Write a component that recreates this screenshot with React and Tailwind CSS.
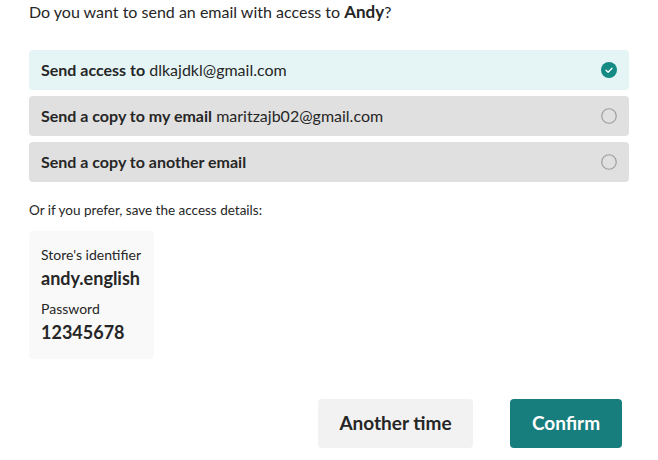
const font = { fontFamily: "Lato, 'Noto Sans', sans-serif" };

function CheckIcon() {
    return (
        <svg width="16" height="16" viewBox="0 0 16 16">
            <circle cx="8" cy="8" r="8" fill="#138a84" />
            <path d="M5 8.2 L7.1 10.2 L11 6.2" stroke="#fff" strokeWidth="1.3" fill="none" strokeLinecap="round" strokeLinejoin="round" />
        </svg>
    );
}

function EmptyCircle() {
    return (
        <svg width="16" height="16" viewBox="0 0 16 16">
            <circle cx="8" cy="8" r="7.25" fill="none" stroke="#9e9e9e" strokeWidth="1.2" />
        </svg>
    );
}

function Option({ label, email, active }) {
    return (
        <div className={`flex flex-row items-center justify-between h-10 rounded px-3 ${active ? "bg-[#e5f5f6]" : "bg-[#e0e0e0]"}`}>
            <span className="text-[16px] text-[#262626]">
                <span className="font-bold">{label}</span>
                {email && <span> {email}</span>}
            </span>
            <div>{active ? <CheckIcon /> : <EmptyCircle />}</div>
        </div>
    );
}

export default function App() {
    return (
        <div className="w-[658px] h-[460px] bg-white text-[#262626] pl-[29px] pr-[29px]" style={font}>
            <div className="pt-[2px] text-[16px] h-[50px] leading-[20px]">
                Do you want to send an email with access to <span className="font-bold text-[17px]">Andy</span>?
            </div>
            <div className="flex flex-col gap-[6px]">
                <Option label="Send access to" email="dlkajdkl@gmail.com" active />
                <Option label="Send a copy to my email" email="maritzajb02@gmail.com" />
                <Option label="Send a copy to another email" />
            </div>
            <div className="mt-[19px] text-[13.5px] leading-[18px]">Or if you prefer, save the access details:</div>
            <div className="mt-[12px] w-[125px] h-[128px] bg-[#f9f9f9] rounded-sm px-3 pt-[15px]">
                <div className="text-[14px] leading-[18px]">Store's identifier</div>
                <div className="text-[18px] font-bold leading-[28px]">andy.english</div>
                <div className="mt-[8px] text-[14px] leading-[18px]">Password</div>
                <div className="text-[18px] font-bold leading-[28px]">12345678</div>
            </div>
            <div className="mt-[40px] flex flex-row justify-end gap-[37px] pr-[7px]">
                <button className="w-[155px] h-[49px] rounded bg-[#f2f2f2] text-[19px] font-bold text-[#262626]">Another time</button>
                <button className="w-[112px] h-[49px] rounded bg-[#177d7d] text-[19px] font-bold text-white">Confirm</button>
            </div>
        </div>
    );
}
